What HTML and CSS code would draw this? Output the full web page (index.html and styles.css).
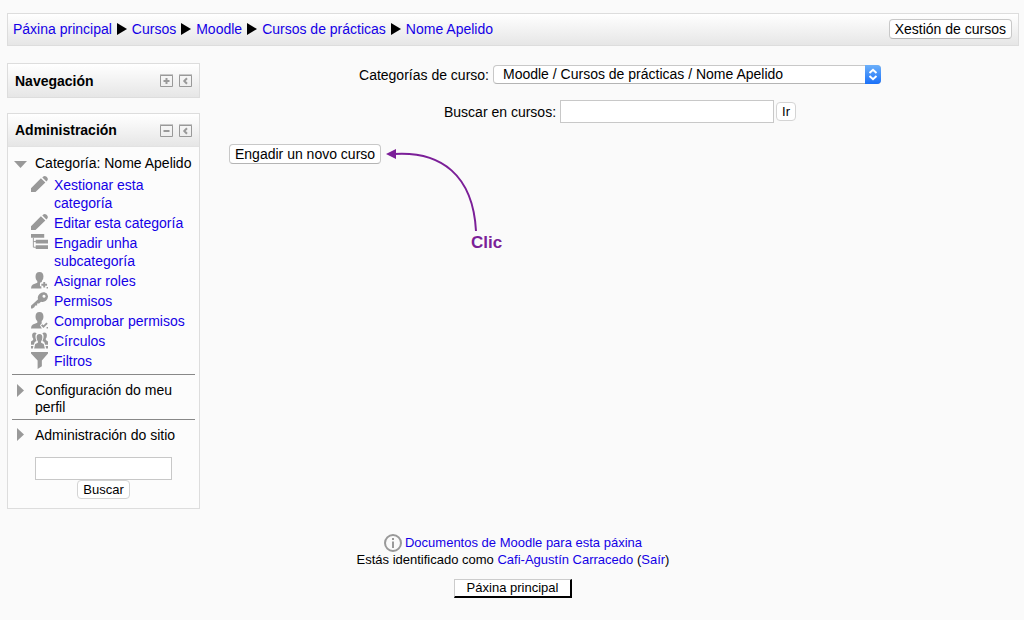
FILE: index.html
```
<!DOCTYPE html>
<html lang="gl">
<head>
<meta charset="utf-8">
<title>Nome Apelido</title>
<link rel="stylesheet" href="styles.css">
</head>
<body>
<header class="navbar">
  <nav class="breadcrumb">
    <a href="#">Páxina principal</a>
    <svg class="sep" viewBox="0 0 10 12"><path d="M0 0L10 6L0 12Z"/></svg>
    <a href="#">Cursos</a>
    <svg class="sep" viewBox="0 0 10 12"><path d="M0 0L10 6L0 12Z"/></svg>
    <a href="#">Moodle</a>
    <svg class="sep" viewBox="0 0 10 12"><path d="M0 0L10 6L0 12Z"/></svg>
    <a href="#">Cursos de prácticas</a>
    <svg class="sep" viewBox="0 0 10 12"><path d="M0 0L10 6L0 12Z"/></svg>
    <a href="#">Nome Apelido</a>
  </nav>
  <button class="btn" type="button">Xestión de cursos</button>
</header>

<div class="columns">
  <aside class="sidebar">
    <section class="block">
      <div class="block-head">
        <h2>Navegación</h2>
        <button class="tool" type="button" aria-label="Amosar"><svg viewBox="0 0 13 13"><path class="frame" d="M.5 1.500h12v11H.5zM0 1h13"/><path class="mark" d="M3.500 7h6M6.500 4v6"/></svg></button>
        <button class="tool" type="button" aria-label="Ancorar"><svg viewBox="0 0 13 13"><path class="frame" d="M.5 1.500h12v11H.5zM0 1h13"/><path class="mark" d="M8 4.300L5.300 7L8 9.700"/></svg></button>
      </div>
    </section>

    <section class="block">
      <div class="block-head divided">
        <h2>Administración</h2>
        <button class="tool" type="button" aria-label="Agochar"><svg viewBox="0 0 13 13"><path class="frame" d="M.5 1.500h12v11H.5zM0 1h13"/><path class="mark" d="M3.500 7h6"/></svg></button>
        <button class="tool" type="button" aria-label="Ancorar"><svg viewBox="0 0 13 13"><path class="frame" d="M.5 1.500h12v11H.5zM0 1h13"/><path class="mark" d="M8 4.300L5.300 7L8 9.700"/></svg></button>
      </div>
      <div class="block-body">
        <div class="branch">
          <svg class="twist" viewBox="0 0 14 14"><path d="M0 4h13L6.500 11Z"/></svg>
          <span>Categoría: Nome Apelido</span>
        </div>
        <ul class="leaves">
          <li><svg class="icon" viewBox="0 0 18 18"><path d="M0 17V13L10.500 2.500L15.200 7L4.800 17ZM12 1.500L13 .5Q14.500-.6 16.500.8Q18.700 2.800 17.300 4.700L16.300 5.700Z"/></svg><a href="#">Xestionar esta categoría</a></li>
          <li><svg class="icon" viewBox="0 0 18 18"><path d="M0 17V13L10.500 2.500L15.200 7L4.800 17ZM12 1.500L13 .5Q14.500-.6 16.500.8Q18.700 2.800 17.300 4.700L16.300 5.700Z"/></svg><a href="#">Editar esta categoría</a></li>
          <li><svg class="icon" viewBox="0 0 18 18"><path d="M0 0h14v4H0zM5 6h13v4H5zM5 12h13v4H5z"/><path class="wire" d="M2.500 4v10H6M2.500 8H6"/></svg><a href="#">Engadir unha subcategoría</a></li>
          <li><svg class="icon" viewBox="0 0 18 18"><path d="M9 0C6 0 4.800 2 4.800 4.700C4.800 7 5.500 8.500 6.700 9.600V11.300L2 13.300Q0 14.200 0 17.500H11V15H9.500V11.500L11.500 10.500V9.600Q13.300 7.500 13.200 4.700C13.200 2 12 0 9 0ZM13 10.500h2v2h2v2h-2v2h-2v-2h-2v-2h2ZM16.500 16h1.500v1.500h-1.500z"/></svg><a href="#">Asignar roles</a></li>
          <li><svg class="icon" viewBox="0 0 18 18"><path fill-rule="evenodd" d="M0 14.500L7.500 7.800Q6.400 4.500 9 2Q11.300-.3 14.300.3Q17.500 1 18 4.200Q18.200 7.300 15.800 9.300Q13.500 11 10.600 10.200L8.500 12.300H6.500V14.300H4.500L3.500 16.200L1.500 17.500H0ZM13.500 3A1.600 1.600 0 1 0 15.300 5A1.600 1.600 0 0 0 13.500 3Z"/></svg><a href="#">Permisos</a></li>
          <li><svg class="icon" viewBox="0 0 18 18"><path d="M9 0C6 0 4.800 2 4.800 4.700C4.800 7 5.500 8.500 6.700 9.600V11.300L2 13.300Q0 14.200 0 17.500H11.500L9.500 14L11.300 12.200V9.600C12.500 8.500 13.200 7 13.200 4.700C13.200 2 12 0 9 0ZM16.500 16h1.500v1.500h-1.500z"/><path class="tick" d="M11.300 13.700L13.200 15.600L17 11.800"/></svg><a href="#">Comprobar permisos</a></li>
          <li><svg class="icon" viewBox="0 0 18 18"><path d="M4 .5C1.800.5 1 2 1.200 4Q1.300 6.200 2.300 7V8.500L0 10V13.500H3L4 10.500L5.800 9.500Q4.500 7 4.700 4Q4.900 2 6 1.200Q5 .5 4 .5ZM14 .5C16.200.5 17 2 16.800 4Q16.700 6.200 15.700 7V8.500L18 10V13.500H15L14 10.500L12.200 9.500Q13.500 7 13.300 4Q13.100 2 12 1.200Q13 .5 14 .5ZM9 2C6.800 2 5.800 3.600 6 6Q6.100 8.700 7.300 9.700V11.300L4.500 12.800L3.300 17.500H14.700L13.500 12.800L10.700 11.300V9.700Q11.900 8.700 12 6C12.200 3.600 11.200 2 9 2ZM0 14.800H2.500L2 17.500H0ZM18 14.800H15.500L16 17.500H18Z"/></svg><a href="#">Círculos</a></li>
          <li><svg class="icon" viewBox="0 0 18 18"><path d="M0 0H18V1.500L11.500 9V15L7 18V9L0 1.500Z"/></svg><a href="#">Filtros</a></li>
        </ul>
        <div class="branch ruled">
          <svg class="twist" viewBox="0 0 14 14"><path d="M3 1V14L10 7.500Z"/></svg>
          <span>Configuración do meu perfil</span>
        </div>
        <div class="branch ruled">
          <svg class="twist" viewBox="0 0 14 14"><path d="M3 0V13L10 6.500Z"/></svg>
          <span>Administración do sitio</span>
        </div>
        <form class="side-search">
          <input class="field" type="text" aria-label="Buscar">
          <button class="btn small" type="button">Buscar</button>
        </form>
      </div>
    </section>
  </aside>

  <main class="content">
    <div class="row">
      <label for="cat">Categorías de curso:</label>
      <span class="select">
        <select id="cat"><option>Moodle / Cursos de prácticas / Nome Apelido</option></select>
        <svg class="knob" viewBox="0 0 16 19"><path d="M4.500 8L8 4.800L11.500 8M4.500 11L8 14.200L11.500 11"/></svg>
      </span>
    </div>
    <form class="row search">
      <label for="q">Buscar en cursos:</label>
      <input class="field" id="q" type="text">
      <button class="btn small" type="button">Ir</button>
    </form>
    <div class="create">
      <button class="btn" type="button">Engadir un novo curso</button>
      <div class="callout">
        <svg viewBox="0 0 96 84"><path class="curve" d="M8 6C55 3 87 27 90 83"/><path class="tip" d="M0 6L10 1V11Z"/></svg>
        <strong>Clic</strong>
      </div>
    </div>
  </main>
</div>

<footer class="footer">
  <p class="docs"><svg viewBox="0 0 18 18"><circle cx="9" cy="9" r="8"/><path d="M9 7.500V14M9 4v2"/></svg><a href="#">Documentos de Moodle para esta páxina</a></p>
  <p>Estás identificado como <a href="#">Cafi-Agustín Carracedo</a> (<a href="#">Saír</a>)</p>
  <button class="home" type="button">Páxina principal</button>
</footer>
</body>
</html>
```
FILE: styles.css
```
* { box-sizing: border-box; }

body {
  margin: 0;
  padding: 13px 5px 20px 7px;
  background: #fafafa;
  color: #000;
  font: 14px/18px "Liberation Sans", Arial, sans-serif;
}

a { color: #1400e6; text-decoration: none; }
button, input, select { font: inherit; color: inherit; margin: 0; }

.navbar {
  display: flex;
  align-items: center;
  justify-content: space-between;
  padding: 5px 6px 6px 5px;
  border: 1px solid #ddd;
  background: linear-gradient(#fff, #e6e6e6);
}
.breadcrumb { display: flex; align-items: center; gap: 5px; }
.sep { width: 10px; height: 12px; }

.btn {
  height: 20px;
  padding: 0 5px;
  border: 1px solid #c8c8c8;
  border-bottom-color: #b4b4b4;
  border-radius: 4px;
  background: #fff;
  line-height: 17px;
}
.btn.small {
  height: 19px;
  border-color: #d4d4d4;
  font-size: 13px;
  line-height: 16px;
}

.field {
  height: 23px;
  padding: 0 3px;
  border: 1px solid #c8c8c8;
  background: #fff;
}

.columns { display: flex; gap: 29px; margin-top: 17px; }
.sidebar { flex: none; width: 193px; }

.block { border: 1px solid #ddd; background: #fcfcfc; margin-bottom: 15px; }
.block-head {
  display: flex;
  align-items: center;
  gap: 6px;
  height: 33px;
  padding: 0 7px;
  background: linear-gradient(#fff, #e6e6e6);
}
.block-head.divided { border-bottom: 1px solid #e2e2e2; }
.block-head h2 { flex: 1; margin: 0; font-size: 14px; }
.tool { display: flex; padding: 0; border: 0; background: none; }
.tool svg { width: 13px; height: 13px; }
.frame { fill: none; stroke: #999; stroke-width: 1; }
.mark { fill: none; stroke: #999; stroke-width: 2; }

.block-body { padding: 8px 4px 9px; }
.branch { position: relative; padding-left: 23px; margin-bottom: 4px; line-height: 17px; }
.branch.ruled { margin: 0; padding: 7px 0 3px 23px; border-top: 1px solid #888; }
.twist { position: absolute; left: 2px; top: 2px; width: 14px; height: 14px; fill: #999; }
.ruled .twist { top: 8px; }

.leaves { margin: 0; padding: 0 0 4px; list-style: none; display: grid; gap: 2px; }
.leaves li { display: grid; grid-template-columns: 17px 1fr; gap: 6px; padding-left: 19px; }
.icon { width: 17px; height: 17px; fill: #999; }
.wire { fill: none; stroke: #999; }
.tick { fill: none; stroke: #999; stroke-width: 2; }

.side-search { display: flex; flex-direction: column; align-items: center; padding: 10px 23px 0; }
.side-search .field { width: 100%; }

.content { flex: 1; padding: 2px 8px 0 0; }
.row { display: flex; align-items: center; justify-content: center; gap: 4px; }
.select { position: relative; display: flex; }
.select select {
  appearance: none;
  width: 388px;
  height: 19px;
  padding: 0 9px;
  border: 1px solid #c8c8c8;
  border-bottom-color: #b4b4b4;
  border-radius: 4px;
  background: #fff;
  line-height: 17px;
}
.knob {
  position: absolute;
  right: 0;
  top: 0;
  width: 16px;
  height: 19px;
  border-radius: 0 4px 4px 0;
  background: linear-gradient(#6cb0fa, #1a70f8);
  fill: none;
  stroke: #fff;
  stroke-width: 2;
  pointer-events: none;
}
.search { margin-top: 16px; }
.search .field { width: 214px; }
.search .btn { margin-left: -2px; }

.create { position: relative; margin-top: 21px; }
.callout { position: absolute; left: 157px; top: 4px; color: #7b1f98; }
.callout svg { display: block; width: 96px; height: 84px; }
.callout strong { display: block; padding-left: 85px; font-size: 17px; line-height: 22px; }
.curve { fill: none; stroke: #7b1f98; stroke-width: 2; }
.tip { fill: #7b1f98; }

.footer {
  display: flex;
  flex-direction: column;
  align-items: center;
  margin-top: 10px;
  font-size: 13px;
  line-height: 16px;
}
.footer p { margin: 0; }
.docs { display: flex; align-items: center; gap: 3px; }
.docs svg { width: 18px; height: 18px; fill: none; stroke: #999; stroke-width: 2; }
.home {
  margin-top: 11px;
  height: 19px;
  padding: 0 12px;
  border: 1px solid #ccc;
  border-right: 2px solid #000;
  border-bottom: 2px solid #000;
  background: #fff;
}
```
